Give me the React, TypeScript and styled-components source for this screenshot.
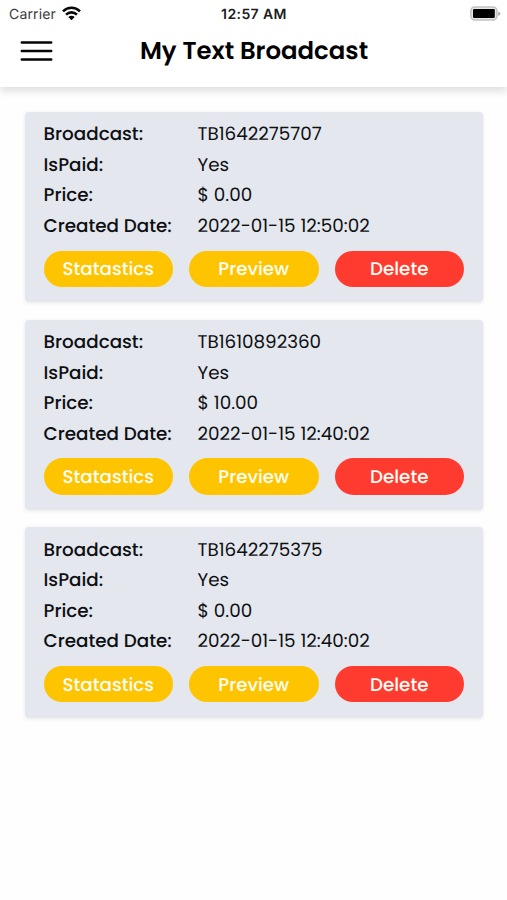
import React from "react";
import styled, { createGlobalStyle } from "styled-components";

const GlobalStyle = createGlobalStyle`
  *, *::before, *::after { box-sizing: border-box; }
  html, body { margin: 0; background: #fefefe; }
  body {
    font-family: Poppins, Inter, sans-serif;
    color: #0d0f12;
    overflow: hidden;
    text-rendering: geometricPrecision;
  }
`;

const Screen = styled.div`
  width: 507px;
  height: 900px;
  display: flex;
  flex-direction: column;
  background: #fefefe;
`;

const Header = styled.header`
  height: 87.4px;
  flex: none;
  background: #fff;
  box-shadow: 0 4px 8px rgba(0, 0, 0, 0.13);
`;

const StatusBar = styled.div`
  height: 27px;
  padding: 0 6px 0 9px;
  display: grid;
  grid-template-columns: 1fr auto 1fr;
  grid-template-rows: 27px;
  align-items: center;
  font-family: Inter, sans-serif;
  font-size: 14px;
  line-height: 25px;
`;

const Carrier = styled.div`
  display: flex;
  align-items: center;
  gap: 6px;
  color: #3a3a3a;
  letter-spacing: 0.15px;
`;

const CarrierName = styled.span`
  padding-top: 2px;
`;

const Clock = styled.div`
  margin-left: -2px;
  padding-top: 2px;
  font-weight: 600;
  font-size: 14px;
  letter-spacing: 0.4px;
  color: #1c1c1c;
`;

const BatterySlot = styled.div`
  display: flex;
  justify-content: flex-end;
`;

const TitleBar = styled.div`
  height: 48px;
  display: grid;
  grid-template-columns: 72px 1fr 72px;
  grid-template-rows: 48px;
  align-items: center;
`;

const MenuButton = styled.button`
  display: flex;
  width: 33px;
  margin-left: 20px;
  padding: 0;
  border: 0;
  background: none;
`;

const Title = styled.h1`
  margin: 0;
  padding-left: 1px;
  text-align: center;
  font-size: 24.4px;
  line-height: 48px;
  font-weight: 600;
  color: #000;
  white-space: nowrap;
`;

const List = styled.main`
  padding: 24.7px 24.5px 0 25px;
  display: flex;
  flex-direction: column;
  gap: 17.4px;
`;

const Card = styled.article`
  height: 190.3px;
  padding: 8.3px 18.5px 0;
  border-radius: 4px;
  background: #e4e7ed;
  box-shadow: 0 1px 4px rgba(0, 0, 0, 0.09);
`;

const Fields = styled.dl`
  margin: 0;
  display: grid;
  grid-template-columns: 154px 1fr;
  grid-auto-rows: 30.5px;
  font-size: 18.33px;
  line-height: 30.5px;
  white-space: nowrap;
`;

const Label = styled.dt`
  font-weight: 500;
`;

const Value = styled.dd`
  margin: 0;
`;

const Actions = styled.div`
  margin-top: 8.2px;
  display: grid;
  grid-template-columns: repeat(3, 1fr);
  gap: 16px;
`;

const Action = styled.button<{ $danger?: boolean }>`
  height: 36.5px;
  padding: 2px 0 0;
  border: 0;
  border-radius: 19px;
  background: ${(p) => (p.$danger ? "#ff3b30" : "#fec400")};
  color: #fffdf5;
  font: 500 18.3px Poppins, Inter, sans-serif;
  text-rendering: inherit;
`;

const WifiIcon = () => (
  <svg width="19" height="15" viewBox="0 0 19 15" fill="none" stroke="#080808" strokeWidth="2.6">
    <path d="M1 5.4C5.9.6 13.1.6 18 5.4" />
    <path d="M4 8.6c3.2-3 7.8-3 11 0" />
    <path d="M6.3 11c1.9-1.7 4.5-1.7 6.4 0l-3.2 3.2z" fill="#080808" stroke="none" />
  </svg>
);

const BatteryIcon = () => (
  <svg width="31" height="16" viewBox="0 0 31 16">
    <rect x="0.9" y="1" width="26" height="13" rx="4" fill="#e6e6e6" stroke="#c2c2c2" strokeWidth="1.6" />
    <rect x="3" y="3.1" width="21.8" height="8.9" rx="1.2" fill="#000" />
    <path d="M28.2 5.4c2.8.8 2.8 3.6 0 4.4z" fill="#a8a8a8" />
  </svg>
);

const MenuIcon = () => (
  <svg width="33" height="24" viewBox="0 0 33 24" stroke="#050505" strokeWidth="2.5" strokeLinecap="round">
    <path d="M1.8 3.4h29.4M1.8 12h29.4M1.8 20.6h29.4" />
  </svg>
);

type Broadcast = { id: string; price: string; created: string };

const broadcasts: Broadcast[] = [
  { id: "TB1642275707", price: "$ 0.00", created: "2022-01-15 12:50:02" },
  { id: "TB1610892360", price: "$ 10.00", created: "2022-01-15 12:40:02" },
  { id: "TB1642275375", price: "$ 0.00", created: "2022-01-15 12:40:02" },
];

const BroadcastCard = ({ id, price, created }: Broadcast) => (
  <Card>
    <Fields>
      <Label>Broadcast:</Label>
      <Value>{id}</Value>
      <Label>IsPaid:</Label>
      <Value>Yes</Value>
      <Label>Price:</Label>
      <Value>{price}</Value>
      <Label>Created Date:</Label>
      <Value>{created}</Value>
    </Fields>
    <Actions>
      <Action>Statastics</Action>
      <Action>Preview</Action>
      <Action $danger>Delete</Action>
    </Actions>
  </Card>
);

export default function App() {
  return (
    <>
      <GlobalStyle />
      <Screen>
        <Header>
          <StatusBar>
            <Carrier>
              <CarrierName>Carrier</CarrierName>
              <WifiIcon />
            </Carrier>
            <Clock>12:57 AM</Clock>
            <BatterySlot>
              <BatteryIcon />
            </BatterySlot>
          </StatusBar>
          <TitleBar>
            <MenuButton aria-label="Menu">
              <MenuIcon />
            </MenuButton>
            <Title>My Text Broadcast</Title>
          </TitleBar>
        </Header>
        <List>
          {broadcasts.map((b) => (
            <BroadcastCard key={b.id} {...b} />
          ))}
        </List>
      </Screen>
    </>
  );
}
